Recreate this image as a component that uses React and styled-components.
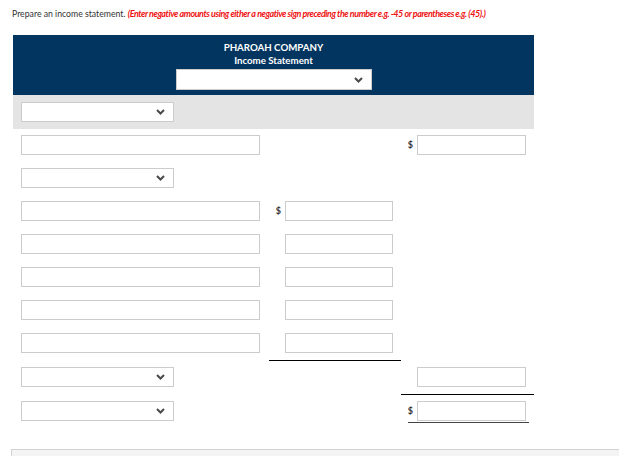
import React from 'react';
import styled, { createGlobalStyle } from 'styled-components';

const GlobalStyle = createGlobalStyle`
  body {
    margin: 0;
    background: #ffffff;
    font-family: Lato, 'Open Sans', sans-serif;
  }
`;

const Page = styled.div`
  width: 619px;
  height: 456px;
  overflow: hidden;
  position: relative;
`;

const Instruction = styled.p`
  margin: 0;
  padding: 8px 0 0 12px;
  height: 27px;
  box-sizing: border-box;
  font-size: 8.7px;
  line-height: 12px;
  color: #333333;
  white-space: nowrap;
  em {
    font-size: 9px;
    letter-spacing: -0.45px;
    color: #ee1111;
    font-weight: bold;
    font-style: italic;
  }
`;

const Table = styled.div`
  margin-left: 13px;
  margin-top: 8px;
  width: 521px;
`;

const Header = styled.div`
  background: #02355f;
  height: 60px;
  display: flex;
  flex-direction: column;
  align-items: center;
  color: #ffffff;
  font-weight: bold;
  font-size: 9.7px;
  padding-top: 6px;
  box-sizing: border-box;
`;

const TitleLine = styled.div`
  line-height: 13px;
  height: 13px;
`;

const HeaderSelectWrap = styled.div`
  margin-top: 2px;
`;

const GrayRow = styled.div`
  background: #e4e4e4;
  height: 34px;
  padding: 7px 0 0 8px;
  box-sizing: border-box;
`;

const Row = styled.div`
  display: grid;
  grid-template-columns: 256px 132px 133px;
`;

const LabelCell = styled.div`
  padding: 6px 0 7px 8px;
`;

const AmountCell = styled.div`
  display: flex;
  align-items: flex-start;
  justify-content: flex-end;
  padding: 6px 8px 7px 0;
  border-bottom: ${(p) => (p.$rule ? '1px solid #000000' : 'none')};
`;

const Total = styled.div`
  display: flex;
  align-items: flex-start;
  border-bottom: 1px solid #444444;
  padding-bottom: 1px;
  margin-right: -3px;
  padding-right: 3px;
`;

const Dollar = styled.span`
  font-size: 9px;
  font-weight: bold;
  color: #333333;
  line-height: 20px;
  margin-right: 4px;
`;

const TextBox = styled.input`
  display: block;
  box-sizing: border-box;
  width: ${(p) => p.$w}px;
  height: 20px;
  border: 1px solid #cccccc;
  background: #ffffff;
  margin: 0;
  padding: 0 4px;
`;

const SelectBox = styled.div`
  box-sizing: border-box;
  width: ${(p) => p.$w}px;
  height: ${(p) => p.$h || 20}px;
  border: 1px solid #cccccc;
  background: #ffffff;
  display: flex;
  align-items: center;
  justify-content: flex-end;
  padding-right: 8px;
`;

const Footer = styled.div`
  position: absolute;
  left: 11px;
  top: 449px;
  right: -2px;
  height: 20px;
  background: #f4f4f4;
  border: 1px solid #d2d2d2;
`;

function Chevron() {
  return (
    <svg width="9" height="6" viewBox="0 0 9 6">
      <path d="M1 1 L4.5 4.5 L8 1" fill="none" stroke="#4a4a4a" strokeWidth="2" />
    </svg>
  );
}

function Select({ w = 153, h }) {
  return (
    <SelectBox $w={w} $h={h}>
      <Chevron />
    </SelectBox>
  );
}

const rows = [
  { kind: 'input', right: true, rightDollar: true },
  { kind: 'select' },
  { kind: 'input', mid: true, midDollar: true },
  { kind: 'input', mid: true },
  { kind: 'input', mid: true },
  { kind: 'input', mid: true },
  { kind: 'input', mid: true, midRule: true },
  { kind: 'select', right: true, rightRule: true },
];

function App() {
  return (
    <Page>
      <GlobalStyle />
      <Instruction>
        Prepare an income statement.{' '}
        <em>
          (Enter negative amounts using either a negative sign preceding the number e.g. -45 or
          parentheses e.g. (45).)
        </em>
      </Instruction>
      <Table>
        <Header>
          <TitleLine>PHAROAH COMPANY</TitleLine>
          <TitleLine>Income Statement</TitleLine>
          <HeaderSelectWrap>
            <Select w={196} h={21} />
          </HeaderSelectWrap>
        </Header>
        <GrayRow>
          <Select />
        </GrayRow>
        {rows.map((r, i) => (
          <Row key={i}>
            <LabelCell>{r.kind === 'input' ? <TextBox $w={239} /> : <Select />}</LabelCell>
            <AmountCell $rule={r.midRule}>
              {r.midDollar && <Dollar>$</Dollar>}
              {r.mid && <TextBox $w={108} />}
            </AmountCell>
            <AmountCell $rule={r.rightRule}>
              {r.rightDollar && <Dollar>$</Dollar>}
              {r.right && <TextBox $w={109} />}
            </AmountCell>
          </Row>
        ))}
        <Row>
          <LabelCell>
            <Select />
          </LabelCell>
          <AmountCell />
          <AmountCell>
            <Total>
              <Dollar>$</Dollar>
              <TextBox $w={109} />
            </Total>
          </AmountCell>
        </Row>
      </Table>
      <Footer />
    </Page>
  );
}

export default App;
